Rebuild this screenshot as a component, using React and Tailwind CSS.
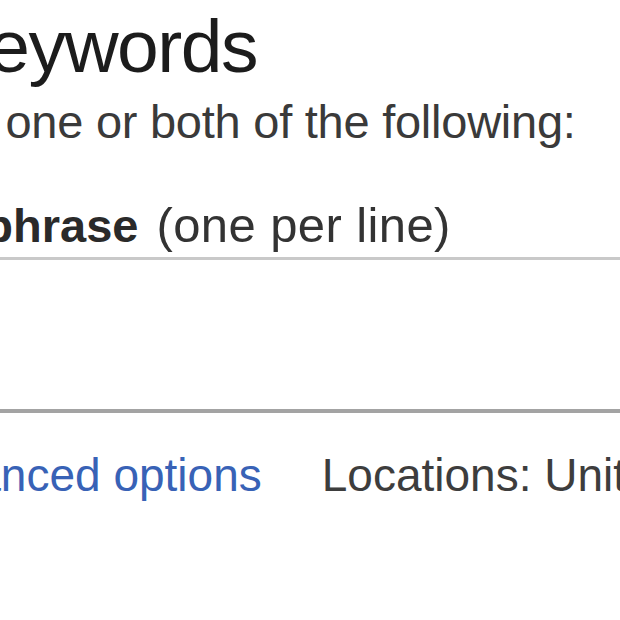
export default function App() {
  return (
    <div className="w-[620px] h-[620px] overflow-hidden bg-white font-['Liberation_Sans',Arial,sans-serif]">
      <h1 className="mt-[6px] -ml-[207px] whitespace-nowrap text-[75px] leading-[80px] tracking-[-1.5px] font-normal text-[#1c1c1c]">
        Find keywords
      </h1>
      <p className="mt-[10px] -ml-[204px] whitespace-nowrap text-[47px] leading-[52px] tracking-[-0.25px] text-[#3a3a3a]">
        Based on one or both of the following:
      </p>
      <div className="mt-[51px] -ml-[208px] whitespace-nowrap text-[47px] leading-[52px] text-[#2a2a2a]">
        <span className="font-bold">Word or phrase</span>
        <span className="ml-[18px] text-[49px] tracking-[0.4px] text-[#333333]">(one per line)</span>
      </div>
      <div className="mt-[5px] -ml-[40px] w-[720px] h-[156px] border-t-[3px] border-b-[4px] border-x-2 border-t-[#c9c9c9] border-b-[#a3a3a3] border-x-[#c9c9c9] bg-white"></div>
      <div className="mt-[36px] flex items-baseline whitespace-nowrap text-[46px] leading-[52px]">
        <span className="-ml-[104px] text-[#3862b6]">Advanced options</span>
        <span className="ml-[60px] text-[#3d3d3d]">Locations: United States</span>
      </div>
    </div>
  );
}
